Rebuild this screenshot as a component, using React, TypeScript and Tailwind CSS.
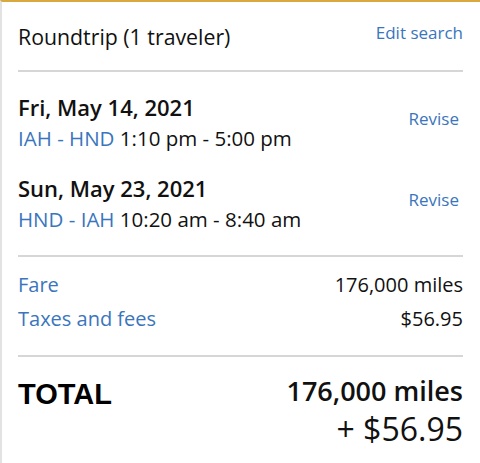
import React from 'react';

const blue = 'text-[#3a75bd]';

const Flight = ({ date, route, time }: { date: string; route: string; time: string }) => (
  <div className="flex items-center justify-between">
    <div>
      <div className="text-[22px] font-semibold leading-[31px] text-[#111]">{date}</div>
      <div className="text-[20.5px] leading-[31px] text-[#111]">
        <span className={blue}>{route}</span> {time}
      </div>
    </div>
    <a className={`text-[17px] ${blue} mr-[4px] -mt-[9px]`}>Revise</a>
  </div>
);

const App = () => {
  return (
    <div
      className="w-[480px] h-[463px] bg-white border-t-2 border-t-[#d9a83e] border-l-2 border-l-[#e2e2e2] pl-[16px] pr-[17px]"
      style={{ fontFamily: '"Open Sans", sans-serif' }}
    >
      <div className="flex items-center justify-between pt-[21px] pb-[19px] border-b-2 border-[#d6d6d6]">
        <span className="text-[21.3px] leading-[28px] text-[#111]">Roundtrip (1 traveler)</span>
        <a className={`text-[17px] ${blue} -mt-[8px]`}>Edit search</a>
      </div>

      <div className="flex flex-col gap-[19px] pt-[20px] pb-[20px] border-b-2 border-[#d6d6d6]">
        <Flight date="Fri, May 14, 2021" route="IAH - HND" time="1:10 pm - 5:00 pm" />
        <Flight date="Sun, May 23, 2021" route="HND - IAH" time="10:20 am - 8:40 am" />
      </div>

      <div className="flex flex-col gap-[3px] pt-[12px] pb-[21px] border-b-2 border-[#d6d6d6]">
        <div className="flex justify-between items-center leading-[31px] text-[20px]">
          <span className={blue}>Fare</span>
          <span className="text-[#111]">176,000 miles</span>
        </div>
        <div className="flex justify-between items-center leading-[31px] text-[20px]">
          <span className={blue}>Taxes and fees</span>
          <span className="text-[#111]">$56.95</span>
        </div>
      </div>

      <div className="flex justify-between pt-[18px]">
        <span
          className="text-[29px] font-bold text-black leading-[38px]"
          style={{ fontFamily: '"Liberation Sans", Arial, sans-serif' }}
        >
          TOTAL
        </span>
        <div className="flex flex-col items-end text-[#111]">
          <span className="text-[27px] font-semibold leading-[32px]">176,000 miles</span>
          <span className="text-[32px] leading-[44px]">+ $56.95</span>
        </div>
      </div>
    </div>
  );
};

export default App;
